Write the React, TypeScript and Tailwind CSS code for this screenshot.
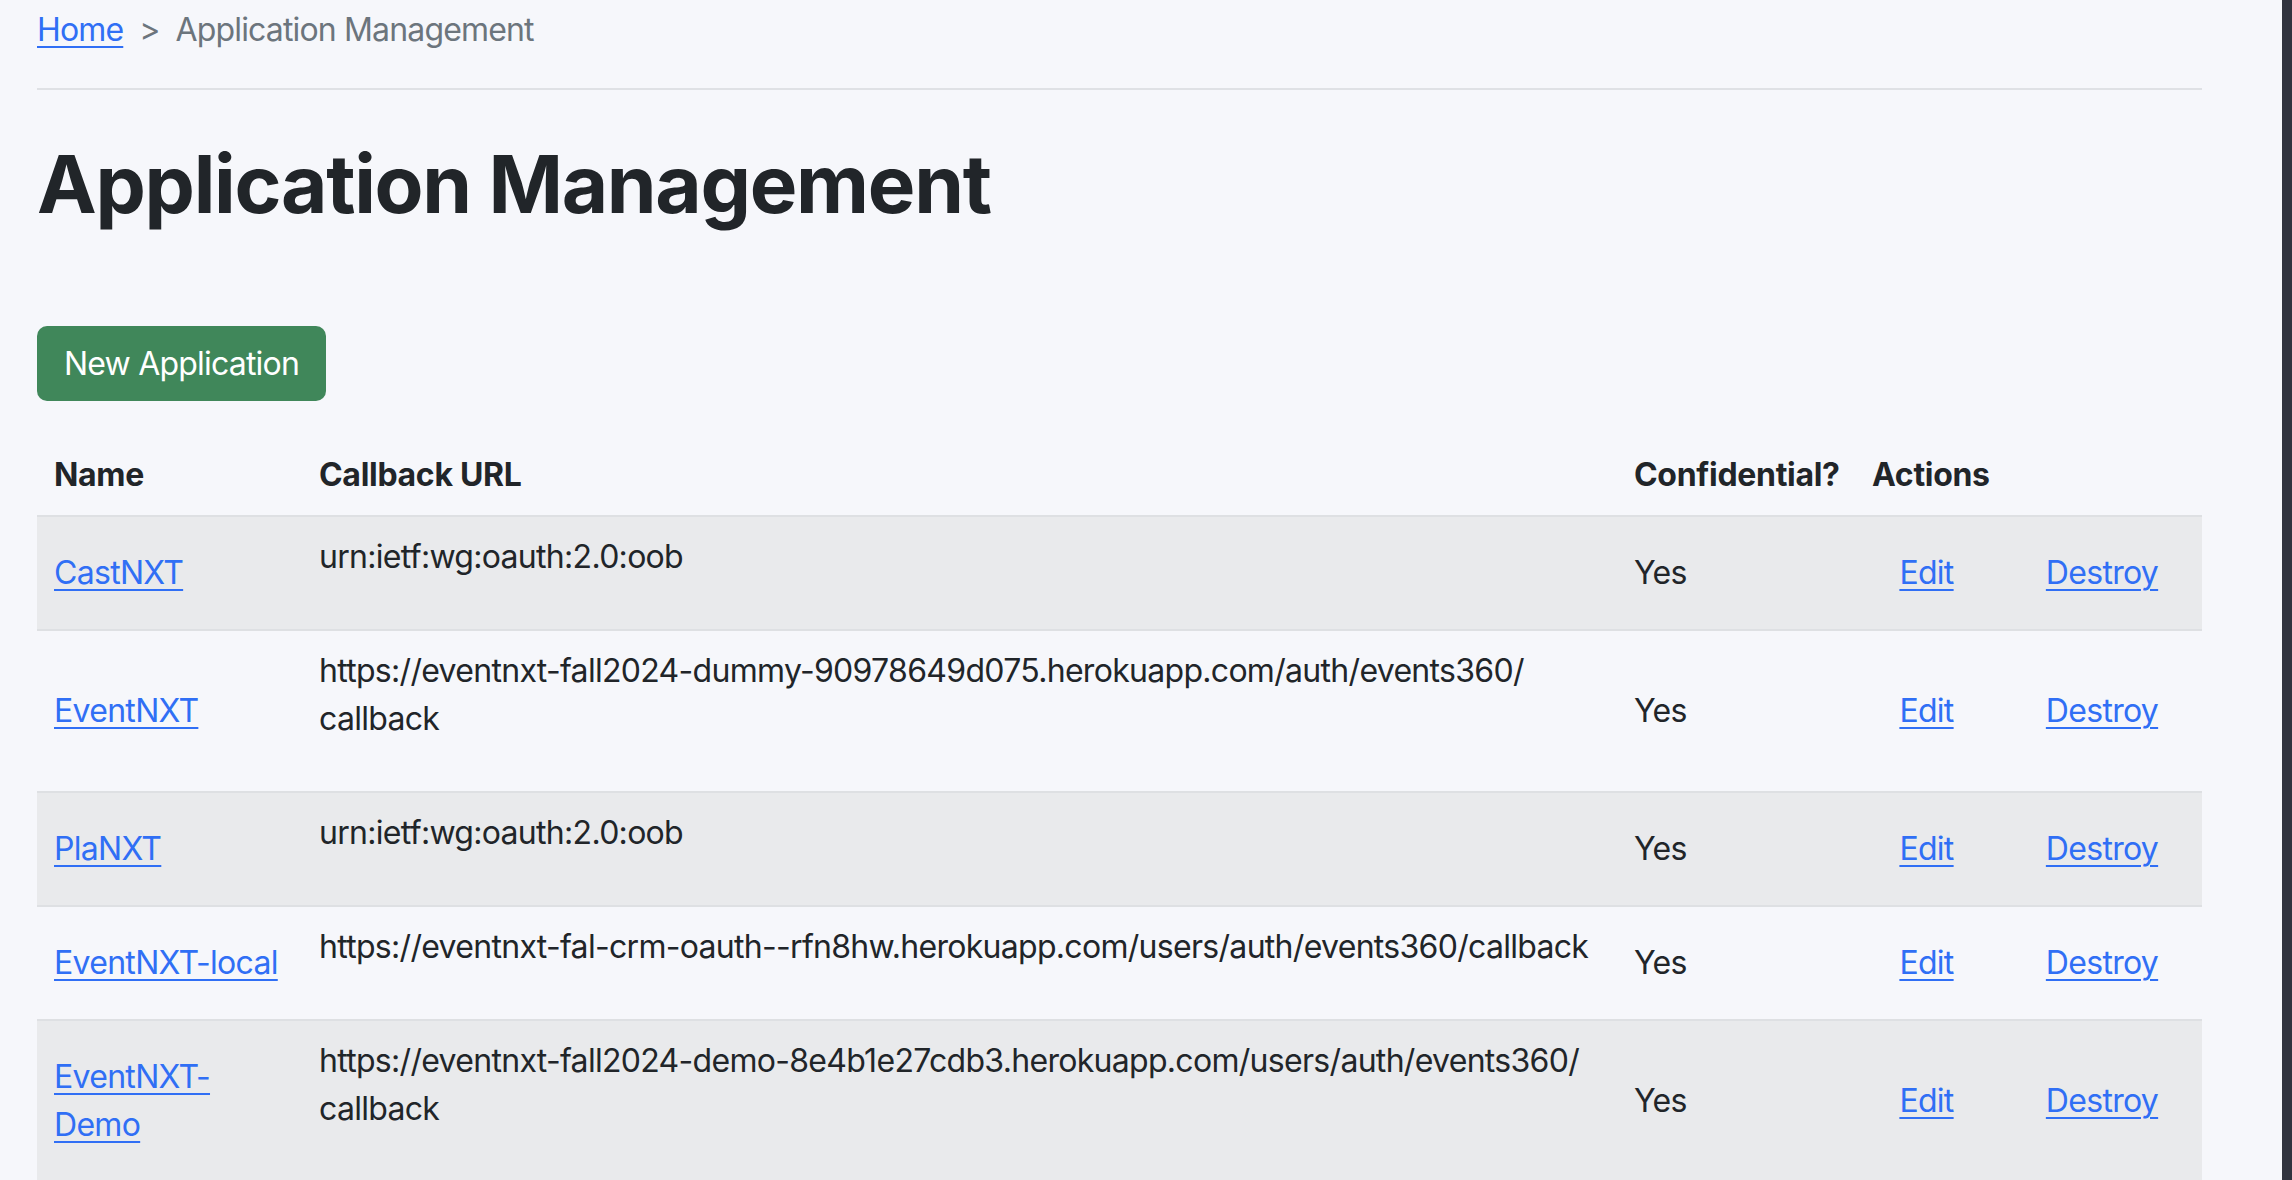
import { Fragment } from "react";

type Application = {
  name: string;
  callbackUrl: string;
  confidential: boolean;
};

const applications: Application[] = [
  { name: "CastNXT", callbackUrl: "urn:ietf:wg:oauth:2.0:oob", confidential: true },
  {
    name: "EventNXT",
    callbackUrl: "https://eventnxt-fall2024-dummy-90978649d075.herokuapp.com/auth/events360/callback",
    confidential: true,
  },
  { name: "PlaNXT", callbackUrl: "urn:ietf:wg:oauth:2.0:oob", confidential: true },
  {
    name: "EventNXT-local",
    callbackUrl: "https://eventnxt-fal-crm-oauth--rfn8hw.herokuapp.com/users/auth/events360/callback",
    confidential: true,
  },
  {
    name: "EventNXT-Demo",
    callbackUrl: "https://eventnxt-fall2024-demo-8e4b1e27cdb3.herokuapp.com/users/auth/events360/callback",
    confidential: true,
  },
];

const linkClass = "text-[#306ff5] underline decoration-2 underline-offset-[5px]";

// let long urls wrap after a slash, like the browser in the screenshot does
function BreakableUrl({ url }: { url: string }) {
  const parts = url.split("/");
  return (
    <>
      {parts.map((part, i) => (
        <Fragment key={i}>
          {part}
          {i < parts.length - 1 && (
            <>
              /{parts[i + 1] !== "" && <wbr />}
            </>
          )}
        </Fragment>
      ))}
    </>
  );
}

export default function App() {
  return (
    <div
      className="flex min-h-screen bg-[#f6f7fb] text-[#212529]"
      style={{ fontFamily: "Inter, 'Noto Sans', 'Liberation Sans', sans-serif" }}
    >
      <main className="flex-1 pl-[37px] pt-[6px]">
        <div className="w-[2165px]">
          <nav className="flex items-center text-[32px] leading-[48px] tracking-[-0.85px]">
            <a href="#" className={linkClass}>
              Home
            </a>
            <span className="mx-[16px] text-[#6c757d]">&gt;</span>
            <span className="text-[#6c757d]">Application Management</span>
          </nav>

          <hr className="mt-[34px] border-0 border-t-2 border-[#dfe1e5]" />

          <h1 className="mt-[46px] text-[80px] font-bold leading-[96px] tracking-[-1.3px]">Application Management</h1>

          <button
            type="button"
            className="mt-[94px] h-[75px] rounded-[10px] bg-[#40875a] px-[27px] text-[32px] leading-[48px] tracking-[-0.8px] text-white"
          >
            New Application
          </button>

          <table className="mt-[34px] w-full table-fixed border-collapse text-left text-[32px] leading-[48px] tracking-[-0.7px]">
            <colgroup>
              <col className="w-[265px]" />
              <col className="w-[1315px]" />
              <col className="w-[238px]" />
              <col className="w-[143px]" />
              <col className="w-[204px]" />
            </colgroup>
            <thead>
              <tr className="border-b-2 border-[#dee0e3]">
                <th className="px-[17px] py-4 font-bold tracking-[-0.3px]">Name</th>
                <th className="px-[17px] py-4 font-bold tracking-[-0.3px]">Callback URL</th>
                <th className="px-[17px] py-4 font-bold tracking-[-0.3px]">Confidential?</th>
                <th colSpan={2} className="px-[17px] py-4 font-bold tracking-[-0.3px]">
                  Actions
                </th>
              </tr>
            </thead>
            <tbody>
              {applications.map((app, index) => (
                <tr
                  key={app.name}
                  className={`border-b-2 border-[#dee0e3] ${index % 2 === 0 ? "bg-[#e9eaec]" : ""}`}
                >
                  <td className="py-4 pl-[17px] pr-[14px] align-middle">
                    <a href="#" className={linkClass}>
                      {app.name}
                    </a>
                  </td>
                  <td className="px-[17px] py-4 align-middle">
                    <p className="mb-8">
                      <BreakableUrl url={app.callbackUrl} />
                    </p>
                  </td>
                  <td className="px-[17px] py-4 align-middle">{app.confidential ? "Yes" : "No"}</td>
                  <td className="py-4 text-center align-middle">
                    <a href="#" className={linkClass}>
                      Edit
                    </a>
                  </td>
                  <td className="py-4 pl-[4px] text-center align-middle">
                    <a href="#" className={linkClass}>
                      Destroy
                    </a>
                  </td>
                </tr>
              ))}
            </tbody>
          </table>
        </div>
      </main>
      <div className="w-[10px] shrink-0 bg-[#31343f]" />
    </div>
  );
}
